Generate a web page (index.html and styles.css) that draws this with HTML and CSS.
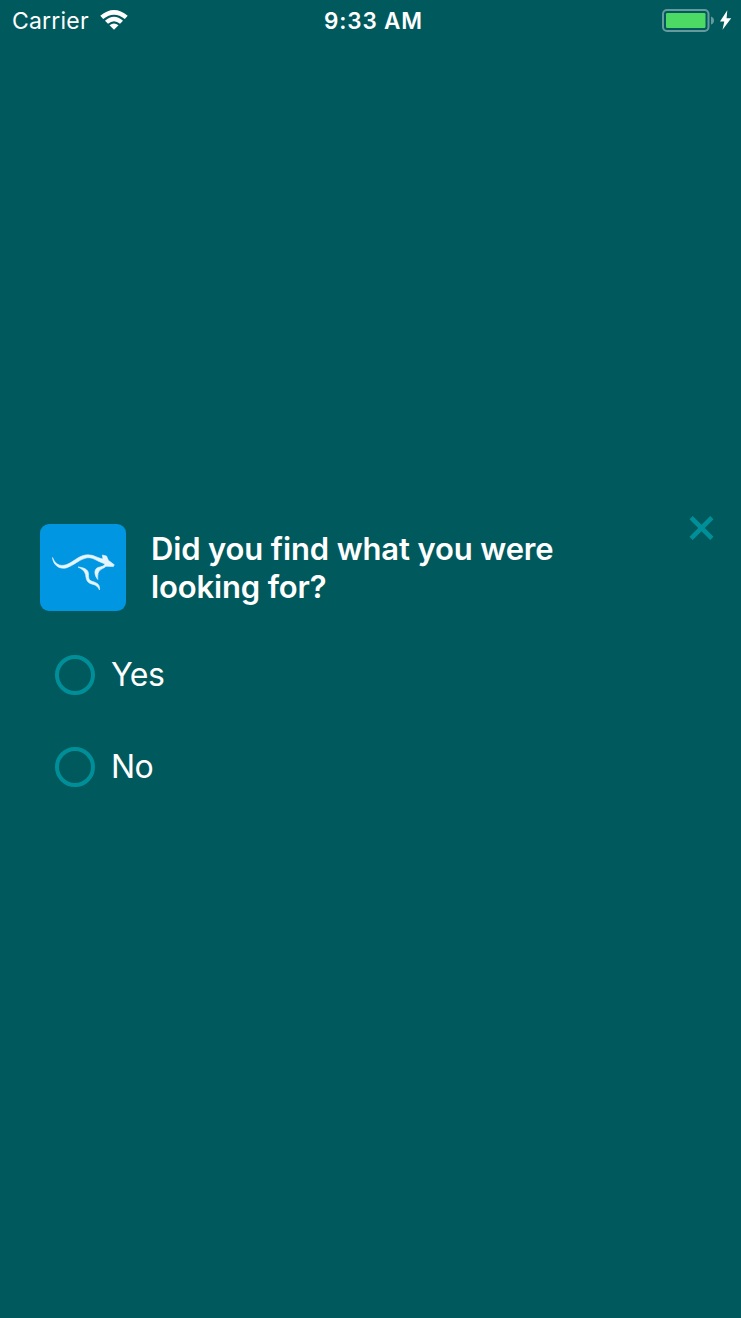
FILE: index.html
```html
<!DOCTYPE html>
<html lang="en">
<head>
<meta charset="utf-8">
<title>Survey</title>
<link rel="stylesheet" href="styles.css">
</head>
<body>
<header class="status">
  <div class="network"><span class="carrier">Carrier</span>
    <svg class="wifi" width="28" height="20" viewBox="0 0 28 20"><path d="M0.3 5.8Q14-5.8 27.7 5.8L24.8 8.9Q14 .4 3.2 8.9ZM5 10.7Q14 3 23 10.7L20 13.8Q14 8.8 8 13.8ZM9.5 15.3Q14 11.5 18.5 15.3L14 19.8Z" fill="#fff"/></svg>
  </div>
  <time class="clock">9:33 AM</time>
  <svg class="battery" width="70" height="24" viewBox="0 0 70 24"><rect x="1" y="1" width="45.5" height="21" rx="4" fill="none" stroke="#669b9d" stroke-width="2"/><rect x="4" y="4" width="39.5" height="15" rx="1.2" fill="#4cd964"/><path d="M49 7.5Q52 8.5 52 11.5T49 15.5Z" fill="#669b9d"/><path d="M65.3 1.2L58 12.5H62.3L60.5 20.7L69.2 9.3H64.6Z" fill="#fff"/></svg>
</header>
<main class="survey">
  <div class="question">
    <svg class="logo" width="86" height="87" viewBox="0 0 86 87"><rect width="86" height="87" rx="9" fill="#0096e1"/><g fill="#e4f5fd" stroke="#e4f5fd" stroke-width=".6" stroke-linejoin="round"><path d="M12.5 33.5C16 42 22 43 29 39.5C35 36.5 40 30.8 48 30.8C54 30.8 57 34 63 35L62.3 31L66.5 32L68.3 36.2L74.3 40.8L73.3 42.6L66 42.3C62 46 57 44.5 57.8 55.5C54 51 53.8 45 58 43.5C61 42.5 64 42.5 65 40L59 37.5C54 35 51 33 46 34C39 35.5 34 41.5 26 44C18 45.5 13 40 12.5 33.5Z"/><path d="M38 43C44 43.5 48.5 45.5 48.5 50C48.5 55 49 56 52 57.3C58 59 60 61 59.5 66C57 61 55 61 51.5 60C46 58.3 46.3 54 45.5 50.5C44.5 46.5 42 45 38 43Z"/></g></svg>
    <h1 class="title">Did you find what you were<br>looking for?</h1>
    <svg class="close" width="25" height="24" viewBox="0 0 25 24"><path d="M2.1 1.6L22.9 22.4M22.9 1.6L2.1 22.4" stroke="#008f98" stroke-width="4.6"/></svg>
  </div>
  <div class="options">
    <div class="option"><span class="radio"></span><span class="yes">Yes</span></div>
    <div class="option"><span class="radio"></span><span class="no">No</span></div>
  </div>
</main>
</body>
</html>
```
FILE: styles.css
```css
* { box-sizing: border-box; }
body { margin: 0; height: 1318px; background: #00595c; color: #fff; font-family: Inter, "Liberation Sans", sans-serif; overflow: hidden; }
.status { height: 41px; padding: 1px 9px 0 12px; display: grid; grid-template-columns: 312px 1fr 70px; align-items: center; font-size: 23px; line-height: 40px; }
.network { display: flex; align-items: center; gap: 11px; }
.carrier { width: 77px; white-space: nowrap; letter-spacing: .2px; }
.wifi, .battery, .logo, .close { display: block; flex: none; }
.wifi { margin-top: -2px; }
.clock { font-weight: 600; font-size: 22.5px; letter-spacing: .85px; }
.survey { padding-top: 483px; }
.question { display: flex; height: 87px; padding: 0 27px 0 40px; }
.title { flex: 1; margin: 6px 0 0 25px; font-size: 31px; font-weight: 600; line-height: 38px; letter-spacing: -.14px; white-space: nowrap; }
.close { margin-top: -8px; }
.options { display: grid; gap: 52px; padding: 44px 0 0 55px; }
.option { display: flex; align-items: center; gap: 16px; height: 40px; font-size: 32px; line-height: 40px; letter-spacing: -.5px; }
.radio { width: 40px; height: 40px; border: 4px solid #008f98; border-radius: 50%; }
```
